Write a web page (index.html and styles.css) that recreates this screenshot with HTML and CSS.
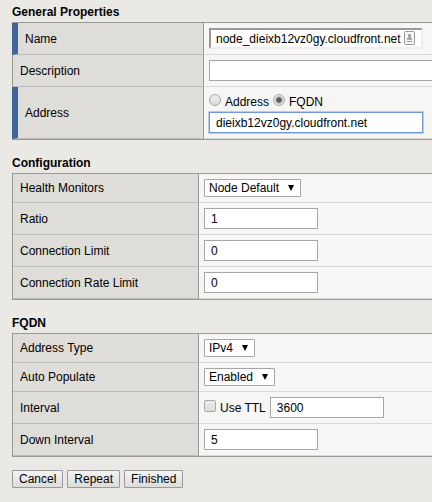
FILE: index.html
```html
<!DOCTYPE html>
<html lang="en">
<head>
<meta charset="utf-8">
<title>New Node</title>
<link rel="stylesheet" href="styles.css">
</head>
<body>
<form class="page">
  <section class="section">
    <h2 class="title">General Properties</h2>
    <div class="panel panel-wide">
      <div class="row required">
        <label class="name" for="name">Name</label>
        <div class="value">
          <span class="field">
            <input class="text text-long text-inset" id="name" type="text" value="node_dieixb12vz0gy.cloudfront.net">
            <svg class="badge" viewBox="0 0 11 14" width="11" height="14" aria-hidden="true">
              <rect x="0.5" y="0.5" width="10" height="13" rx="1" fill="#f4f4f4" stroke="#999"/>
              <rect x="4" y="3" width="3" height="4" rx="1" fill="#a2a2a2"/>
              <path d="M3 7h5v2H3z" fill="#a8a8a8"/>
              <path d="M3 10h5v1H3z" fill="#999"/>
            </svg>
          </span>
        </div>
      </div>
      <div class="row">
        <label class="name" for="description">Description</label>
        <div class="value value-bleed"><input class="text text-full" id="description" type="text"></div>
      </div>
      <div class="row required">
        <label class="name" for="address">Address</label>
        <div class="value value-stack">
          <div class="options">
            <label class="option"><input class="radio" type="radio" name="kind">Address</label>
            <label class="option"><input class="radio" type="radio" name="kind" checked>FQDN</label>
          </div>
          <input class="text text-long text-active" id="address" type="text" value="dieixb12vz0gy.cloudfront.net">
        </div>
      </div>
    </div>
  </section>

  <section class="section">
    <h2 class="title">Configuration</h2>
    <div class="panel">
      <div class="row">
        <label class="name" for="monitors">Health Monitors</label>
        <div class="value"><span class="drop"><select class="select" id="monitors"><option>Node Default</option></select></span></div>
      </div>
      <div class="row">
        <label class="name" for="ratio">Ratio</label>
        <div class="value"><input class="text" id="ratio" type="text" value="1"></div>
      </div>
      <div class="row">
        <label class="name" for="limit">Connection Limit</label>
        <div class="value"><input class="text" id="limit" type="text" value="0"></div>
      </div>
      <div class="row">
        <label class="name" for="rate">Connection Rate Limit</label>
        <div class="value"><input class="text" id="rate" type="text" value="0"></div>
      </div>
    </div>
  </section>

  <section class="section">
    <h2 class="title">FQDN</h2>
    <div class="panel">
      <div class="row">
        <label class="name" for="type">Address Type</label>
        <div class="value"><span class="drop"><select class="select" id="type"><option>IPv4</option></select></span></div>
      </div>
      <div class="row">
        <label class="name" for="populate">Auto Populate</label>
        <div class="value"><span class="drop"><select class="select" id="populate"><option>Enabled</option></select></span></div>
      </div>
      <div class="row">
        <label class="name" for="interval">Interval</label>
        <div class="value">
          <label class="option"><input class="check" type="checkbox">Use TTL</label>
          <input class="text" id="interval" type="text" value="3600">
        </div>
      </div>
      <div class="row">
        <label class="name" for="down">Down Interval</label>
        <div class="value"><input class="text" id="down" type="text" value="5"></div>
      </div>
    </div>
  </section>

  <div class="actions">
    <button class="button" type="button">Cancel</button>
    <button class="button" type="button">Repeat</button>
    <button class="button" type="button">Finished</button>
  </div>
</form>
</body>
</html>
```
FILE: styles.css
```css
* {
  box-sizing: border-box;
}

body {
  margin: 0;
  background: #eae9e5;
  color: #000;
  font: 12px/14px "Liberation Sans", Arial, sans-serif;
}

.page {
  padding: 5px 0 13px 12px;
}

.section {
  margin-bottom: 16px;
}

.title {
  margin: 0 0 3px;
  font-size: 12px;
  line-height: 14px;
}

/* Panels run off the right edge of the frame, so they have no right border. */
.panel {
  --name-width: 186px;
  border: 1px solid #999;
  border-right: 0;
}

.panel-wide {
  --name-width: 191px;
}

.row {
  display: grid;
  grid-template-columns: var(--name-width) 1fr;
}

.name {
  display: flex;
  align-items: center;
  padding-left: 7px;
  background: #dfddd9;
  border-right: 1px solid #999;
  border-bottom: 1px solid #bbbab8;
}

.required .name {
  margin-left: -1px;
  border-left: 6px solid #3e6797;
}

.value {
  display: flex;
  align-items: center;
  gap: 4px;
  min-width: 0;
  padding: 5px;
  background: #f7f6f5;
  border-bottom: 1px solid #d9d9d8;
}

.value-bleed {
  padding-right: 0;
}

.value-stack {
  flex-direction: column;
  align-items: flex-start;
  gap: 0;
}

.field,
.drop {
  position: relative;
  display: flex;
}

.text {
  width: 114px;
  height: 21px;
  margin: 0;
  padding: 1px 6px 0;
  border: 1px solid #a6a6a6;
  background: #fff;
  color: #000;
  font: inherit;
}

.text-long {
  width: 214px;
}

.text-full {
  width: 100%;
  border-right: 0;
}

.text-inset {
  padding: 1px 5px 0;
  border: 2px solid;
  border-color: #999 #eee #eee #999;
}

.text-active {
  border-color: #7397dc;
  box-shadow: 0 0 0 1px #b9cdf2;
}

.badge {
  position: absolute;
  top: 3px;
  right: 8px;
}

.options {
  display: flex;
  gap: 4px;
  height: 20px;
}

.option {
  display: flex;
  align-items: center;
  gap: 4px;
}

.radio,
.check {
  appearance: none;
  width: 12px;
  height: 12px;
  margin: 0 0 4px;
  border: 1px solid #a9a9a9;
  background: linear-gradient(#ececec, #dcdcdc);
}

.radio {
  border-radius: 50%;
}

.radio:checked {
  background: radial-gradient(circle, #5c5c5c 0 2px, #5c5c5c00 4px), #e4e4e4;
}

.check {
  border-radius: 2px;
}

.select {
  appearance: none;
  height: 18px;
  margin: 0;
  padding: 0 20px 0 4px;
  border: 1px solid #a6a6a6;
  border-radius: 1px;
  background: #fff;
  color: #000;
  font: inherit;
}

.drop::after {
  content: "";
  position: absolute;
  top: 6px;
  right: 7px;
  width: 6px;
  height: 6px;
  background: #000;
  clip-path: polygon(0 0, 100% 0, 50% 100%);
  pointer-events: none;
}

.actions {
  display: flex;
  gap: 4px;
  margin-top: -3px;
}

.button {
  height: 18px;
  margin: 0;
  padding: 0 6px;
  border: 1px solid #999;
  border-radius: 1px;
  background: linear-gradient(#f4f4f4, #dcdcdc);
  color: #000;
  font: inherit;
}
```
